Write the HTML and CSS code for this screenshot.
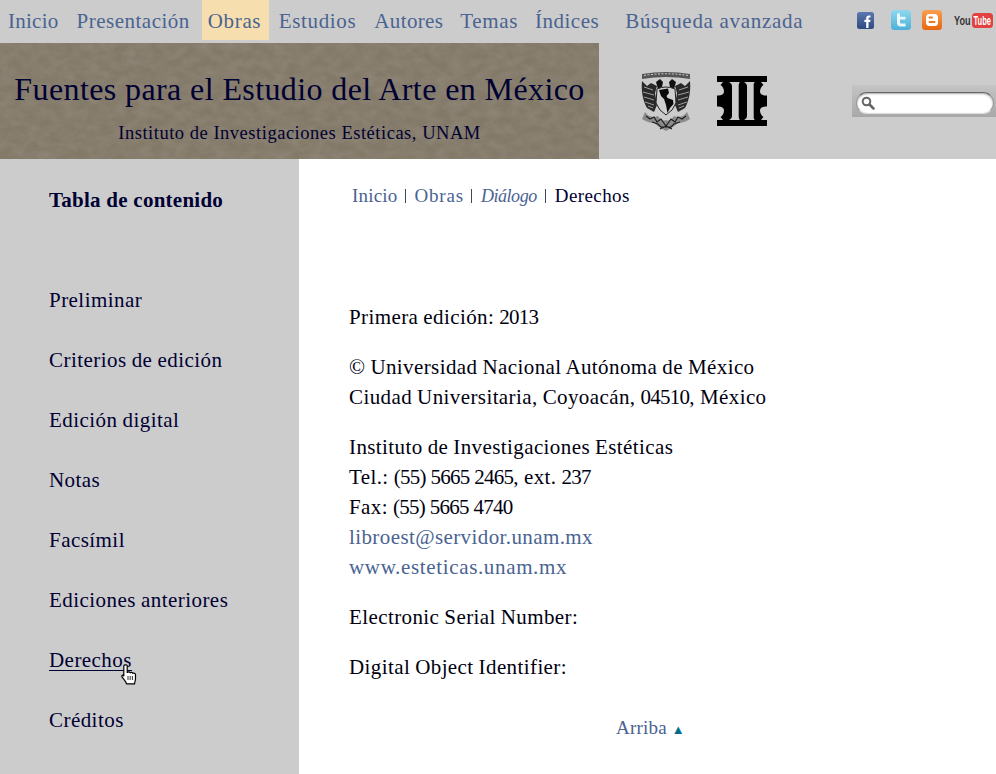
FILE: index.html
```html
<!DOCTYPE html>
<html lang="es">
<head>
<meta charset="utf-8">
<title>Fuentes para el Estudio del Arte en México</title>
<link rel="stylesheet" href="styles.css">
</head>
<body>
<nav class="topnav">
  <a class="tn tn-inicio" href="#">Inicio</a>
  <a class="tn tn-pres" href="#">Presentación</a>
  <a class="tn tn-obras" href="#">Obras</a>
  <a class="tn tn-est" href="#">Estudios</a>
  <a class="tn tn-aut" href="#">Autores</a>
  <a class="tn tn-tem" href="#">Temas</a>
  <a class="tn tn-ind" href="#">Índices</a>
  <a class="tn tn-bus" href="#">Búsqueda avanzada</a>
  <div class="social">
    <svg class="ic-fb" width="17" height="17" viewBox="0 0 17 17"><defs><linearGradient id="fbg" x1="0" y1="0" x2="0" y2="1"><stop offset="0" stop-color="#5c78b0"/><stop offset="1" stop-color="#2f4a80"/></linearGradient></defs><rect width="17" height="17" rx="2.5" fill="url(#fbg)"/><path d="M9.2 16V10H7.4V7.8h1.8V6.2C9.2 4.4 10.300 3.400 12 3.400h1.500v2.100h-1c-.8 0-1 .4-1 1v1.300h2l-.3 2.200h-1.700v6z" fill="#fff"/></svg>
    <svg class="ic-tw" width="20" height="20" viewBox="0 0 20 20"><defs><linearGradient id="twg" x1="0" y1="0" x2="0" y2="1"><stop offset="0" stop-color="#8fd8ee"/><stop offset="1" stop-color="#4cb0d8"/></linearGradient></defs><rect width="20" height="20" rx="3.500" fill="url(#twg)"/><path d="M6 3.500h3v3.300h5.500v2.700H9v2.600c0 1 .6 1.500 1.600 1.500h4v3h-5C7.300 16.600 6 15.200 6 13z" fill="#eaf8fc"/></svg>
    <svg class="ic-bl" width="20" height="20" viewBox="0 0 20 20"><defs><linearGradient id="blg" x1="0" y1="0" x2="0" y2="1"><stop offset="0" stop-color="#f8a050"/><stop offset="1" stop-color="#e8660f"/></linearGradient></defs><rect width="20" height="20" rx="3.500" fill="url(#blg)"/><rect x="4" y="4" width="12" height="12" rx="3.500" fill="#fff"/><rect x="6.500" y="6.500" width="4.500" height="2" rx="1" fill="#ee7a20"/><rect x="6.500" y="11" width="7" height="2" rx="1" fill="#ee7a20"/></svg>
    <svg class="ic-yt" width="40" height="16" viewBox="0 0 40 16"><rect x="18" y="0" width="21" height="15" rx="3.500" fill="#e2413f"/><g transform="scale(.7 1)"><text x="0" y="12.500" class="yt-you">You</text></g><g transform="translate(19.500 0) scale(.58 1)"><text x="0" y="12.500" class="yt-tube">Tube</text></g></svg>
  </div>
</nav>

<header class="masthead">
  <div class="banner">
    <svg class="paper" width="599" height="116" aria-hidden="true"><filter id="grain"><feTurbulence type="fractalNoise" baseFrequency="0.08 0.12" numOctaves="5" seed="7"/><feColorMatrix type="matrix" values="0 0 0 0 0.38  0 0 0 0 0.35  0 0 0 0 0.29  0.5 0 0 0 -0.14"/></filter><rect width="599" height="116" fill="#837969"/><rect width="599" height="116" filter="url(#grain)"/></svg>
    <h1 class="title">Fuentes para el Estudio del Arte en México</h1>
    <p class="subtitle">Instituto de Investigaciones Estéticas, UNAM</p>
  </div>
  <div class="logos">
    <svg class="unam" width="52" height="60" viewBox="0 0 52 60">
      <g class="crest">
        <path d="M2 3Q26 -1 50 3L50 8Q26 4 2 8Z" fill="#555"/>
        <path d="M4 4.500Q26 1 48 4.500" fill="none" stroke="#ddd" stroke-width=".9" stroke-dasharray="2 1.500"/>
        <path d="M2 10C1 20 3 30 7 37L14 41L17 34L15 22L17 15L11 12L7 15Z" fill="#2a2a2a"/>
        <path d="M50 10C51 20 49 30 45 37L38 41L35 34L37 22L35 15L41 12L45 15Z" fill="#2a2a2a"/>
        <path d="M4 16l9 3M3 21l11 3M4 26l10 3M5 31l9 3M8 35l5 2M48 16l-9 3M49 21l-11 3M48 26l-10 3M47 31l-9 3M44 35l-5 2" stroke="#bbb" stroke-width=".8"/>
        <path d="M16 11l4-3 3 3-1 5-4 2zM36 11l-4-3-3 3 1 5 4 2z" fill="#111"/>
        <path d="M17 18Q26 14 35 18L36 32Q33 40 26 44Q19 40 16 32Z" fill="#cfcfcf" stroke="#222" stroke-width="1"/>
        <path d="M19 19L28 17.500L29 22L26.500 25L27.500 27L33 29L33.500 33L30 37L27.500 42L26 34L24 28L21 25Z" fill="#0a0a0a"/>
        <path d="M5 41Q10 48 18 45Q22 51 26 49Q30 51 34 45Q42 48 47 41L50 48Q44 52 38 52L33 56L26 60L19 56L14 52Q8 52 2 48Z" fill="#8a8a8a"/>
        <path d="M6 45l4 3 4-2 3 5 4-3 5 7 5-7 4 3 3-5 4 2 4-3M12 51l6 2 3 3h10l3-3 6-2M20 58l6-3 6 3" fill="none" stroke="#1c1c1c" stroke-width="1.100"/>
      </g>
    </svg>
    <svg class="iie" width="50" height="50" viewBox="0 0 50 50">
      <rect width="50" height="50" fill="#000"/>
      <path d="M12 6H23C22 7 21.700 8 21.700 10V40C21.700 42 22 43 23 44H12C13.500 43 15 42 15 40V10C15 8 13.500 7 12 6Z" fill="#ccc"/>
      <path d="M27 6H38C36.500 7 36.700 8 36.700 10V40C36.700 42 36.500 43 38 44H27C28.500 43 30 42 30 40V10C30 8 28.500 7 27 6Z" fill="#ccc"/>
      <path d="M0 6H6L3.500 9C5.500 10 7 13 7 15.500C7 18 5 19.500 0 19.500Z M0 30.500C5 30.500 7 32 7 34.500C7 37 5.500 40 3.500 41L6 44H0Z M50 6H44L46.500 9C44.500 10 43 13 43 15.500C43 18 45 19.500 50 19.500Z M50 30.500C45 30.500 43 32 43 34.500C43 37 44.500 40 46.500 41L44 44H50Z" fill="#ccc"/>
    </svg>
  </div>
  <form class="search">
    <div class="search-box">
      <svg width="14" height="14" viewBox="0 0 14 14"><circle cx="5.500" cy="5.500" r="3.800" fill="none" stroke="#666" stroke-width="2"/><path d="M8.500 8.500L12.500 12.500" stroke="#666" stroke-width="2.500" stroke-linecap="round"/></svg>
    </div>
  </form>
</header>

<div class="page">
  <aside class="sidebar">
    <h2 class="toc-title">Tabla de contenido</h2>
    <ul class="toc">
      <li><a href="#">Preliminar</a></li>
      <li><a href="#">Criterios de edición</a></li>
      <li><a href="#">Edición digital</a></li>
      <li><a href="#">Notas</a></li>
      <li><a href="#">Facsímil</a></li>
      <li><a href="#">Ediciones anteriores</a></li>
      <li class="hover"><a href="#">Derechos</a>
        <svg class="cursor" width="16" height="21" viewBox="0 0 16 21"><path d="M2.800 2C2.800 .4 6.200 .4 6.200 2V8.500C7 7.600 8.700 7.600 9.200 8.700C10 8 11.500 8.200 11.800 9.300C12.700 8.800 14.500 9.300 14.500 10.800V14.500C14.500 16.500 13.800 17.500 13.500 19.800H5.500C5 17.500 3.200 16 1.200 13.200C.3 11.700 1.500 10.300 2.800 11.800Z" fill="#fff" stroke="#000" stroke-width="1.200" stroke-linejoin="round"/><path d="M7 12v4M9.200 12v4M11.400 12v4" stroke="#000" stroke-width=".8"/></svg>
      </li>
      <li><a href="#">Créditos</a></li>
    </ul>
  </aside>
  <main class="content">
    <div class="crumbs">
      <a class="cr-ini" href="#">Inicio</a><span class="sep"></span><a class="cr-obr" href="#">Obras</a><span class="sep"></span><a href="#"><em>Diálogo</em></a><span class="sep"></span><span class="here">Derechos</span>
    </div>
    <p>Primera edición: <span class="num">2013</span></p>
    <p><span class="copy">©</span> Universidad Nacional Autónoma de México<br>Ciudad Universitaria, Coyoacán, <span class="num">04510</span>, México</p>
    <p>Instituto de Investigaciones Estéticas<br>Tel.: <span class="num">(55) 5665 2465</span>, ext. <span class="num">237</span><br>Fax: <span class="num">(55) 5665 4740</span><br><a href="#">libroest@servidor.unam.mx</a><br><a class="web" href="#">www.esteticas.unam.mx</a></p>
    <p>Electronic Serial Number:</p>
    <p>Digital Object Identifier:</p>
    <div class="top"><a href="#">Arriba</a><span class="arrow">▲</span></div>
  </main>
</div>
</body>
</html>
```
FILE: styles.css
```css
* { box-sizing: border-box; }
html, body { margin: 0; padding: 0; height: 774px; overflow: hidden; background: #fff; }
body { font-family: "Liberation Serif", "Times New Roman", serif; color: #00000f; font-size: 21px; letter-spacing: .4px; word-spacing: -.6px; }
a { color: #4a6391; text-decoration: none; }

.topnav { display: flex; align-items: flex-start; height: 43px; background: #ccc; font-size: 21px; line-height: 42px; word-spacing: 0; }
.tn { display: block; height: 40px; letter-spacing: .65px; }
.tn-inicio { margin-left: 8px; letter-spacing: .25px; }
.tn-pres { margin-left: 18px; letter-spacing: .5px; }
.tn-obras { margin-left: 12px; width: 67px; padding-left: 6px; background: #f6deae; }
.tn-est { margin-left: 10px; }
.tn-aut { margin-left: 18px; letter-spacing: .35px; }
.tn-tem { margin-left: 17px; }
.tn-ind { margin-left: 17px; letter-spacing: .5px; }
.tn-bus { margin-left: 26px; letter-spacing: .7px; }

.social { position: absolute; left: 857px; top: 10px; display: flex; align-items: flex-start; }
.ic-fb { margin-top: 2px; }
.ic-tw { margin-left: 17px; }
.ic-bl { margin-left: 11px; }
.ic-yt { margin-left: 12px; margin-top: 3px; }
.yt-you, .yt-tube { font-family: "Liberation Sans", sans-serif; font-size: 13px; font-weight: 700; letter-spacing: 0; }
.yt-you { fill: #333; }
.yt-tube { fill: #fff; }

.masthead { display: flex; height: 116px; background: #ccc; position: relative; word-spacing: 0; }
.banner { position: relative; width: 599px; height: 116px; color: #000033; text-align: center; overflow: hidden; }
.paper { position: absolute; left: 0; top: 0; }
.title { position: relative; margin: 27px 0 0; font-size: 32px; line-height: 38px; font-weight: 400; letter-spacing: .4px; }
.subtitle { position: relative; margin: 14px 0 0 0; font-size: 18.500px; line-height: 22px; letter-spacing: .52px; }
.logos { display: flex; align-items: flex-start; }
.unam { margin: 28px 0 0 41px; }
.crest { filter: blur(.4px); }
.iie { margin: 33px 0 0 25px; }
.search { position: absolute; left: 852px; top: 42px; width: 144px; height: 32px; background: linear-gradient(#c4c4c4, #a8a8a8); padding: 7px 2px 0 4px; }
.search-box { height: 22px; background: #fff; border: 1px solid #999; border-top-color: #666; border-bottom-color: #ddd; border-radius: 11px; padding: 3px 0 0 4px; box-shadow: inset 0 1px 2px #aaa; }
.search-box svg { display: block; }

.page { display: flex; height: 615px; }
.sidebar { width: 299px; background: #ccc; padding: 27px 0 0 49px; color: #000033; }
.toc-title { margin: 0; font-size: 21px; line-height: 28px; font-weight: 700; letter-spacing: .25px; word-spacing: 0; }
.toc { list-style: none; margin: 56px 0 0; padding: 0; letter-spacing: .45px; }
.toc li { height: 60px; line-height: 60px; position: relative; }
.toc a { color: #000033; }
.hover a { text-decoration: underline; text-decoration-thickness: 1px; text-underline-offset: 3px; }
.cursor { position: absolute; left: 72px; top: 34px; }

.content { flex: 1; padding: 23px 0 0 50px; }
.content p { margin: 0 0 20px; line-height: 30px; }
.num { letter-spacing: -.75px; word-spacing: .3px; }
.web { letter-spacing: .65px; }
.crumbs { display: flex; align-items: center; height: 28px; margin: 0 0 92px 3px; font-size: 19px; letter-spacing: .4px; line-height: 28px; word-spacing: 0; }
.cr-ini { letter-spacing: .2px; }
.cr-obr { letter-spacing: .8px; }
.crumbs em { font-size: 18px; letter-spacing: -.45px; padding-right: 1px; }
.sep { display: block; width: 1px; height: 14px; background: #445; margin: 0 9px 0 7px; }
.here { color: #000033; }
.top { margin: 30px 0 0 267px; font-size: 19px; letter-spacing: .2px; line-height: 32px; }
.arrow { color: #006b8f; font-size: 13px; margin-left: 5px; }
```
